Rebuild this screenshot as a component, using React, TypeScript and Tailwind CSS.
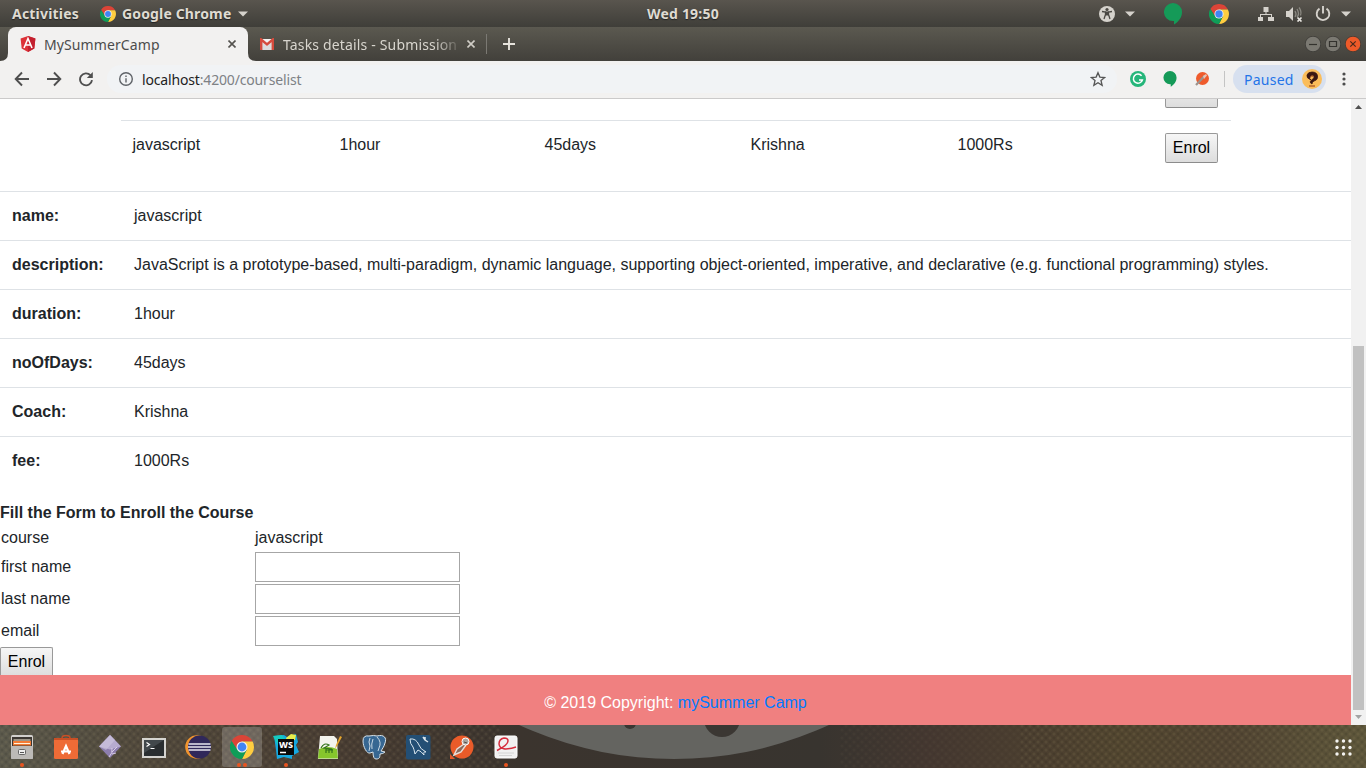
import React from "react";

const ChromeLogo = ({ size, className = "" }: { size: number; className?: string }) => (
  <svg width={size} height={size} viewBox="0 0 48 48" className={`shrink-0 ${className}`}>
    <path d="M24 13h20.2l.6-1A24 24 0 0 0 3.2 12L14.5 29.5z" fill="#db4437" />
    <path d="M24 13h21.3A24 24 0 0 1 24 48l9.5-18.5z" fill="#ffcd40" />
    <path d="M14.5 29.5 3.2 12A24 24 0 0 0 24 48l9.5-18.5z" fill="#0f9d58" />
    <circle cx="24" cy="24" r="11" fill="#f1f1f1" />
    <circle cx="24" cy="24" r="8.8" fill="#4285f4" />
  </svg>
);

const Caret = ({ className = "" }: { className?: string }) => (
  <svg width="10" height="6" viewBox="0 0 10 6" className={`shrink-0 ${className}`}>
    <path d="M0 .5h10L5 5.500z" fill="#d5d2cc" />
  </svg>
);

const Hangouts = ({ w, h, className = "" }: { w: number; h: number; className?: string }) => (
  <svg width={w} height={h} viewBox="0 0 18 22" className={`shrink-0 ${className}`}>
    <path d="M9 0a9 9 0 0 1 9 9.200c0 5.300-3.500 9.500-8 12.300v-3.400H9A9 9 0 0 1 9 0z" fill="#159a58" />
  </svg>
);

const TopBar = () => (
  <header className="flex h-[27px] shrink-0 items-center bg-linear-to-b from-[#59554e] to-[#3f3e39] text-[14px] font-bold text-[#dfdbd2] [text-shadow:0_1px_1px_#222]">
    <span className="ml-3 w-[88px] tracking-[0.2px]">Activities</span>
    <ChromeLogo size={16} />
    <span className="ml-[6px] w-[116px] whitespace-nowrap tracking-[0.15px]">Google Chrome</span>
    <Caret />
    <span className="ml-[399px] w-[452px] whitespace-nowrap tracking-[0.2px]">Wed 19:50</span>
    <svg width="16" height="16" viewBox="0 0 16 16" className="shrink-0">
      <circle cx="8" cy="8" r="8" fill="#d5d2cc" />
      <circle cx="8" cy="3.500" r="1.600" fill="#4a4843" />
      <path d="M3 5.500 6.500 6v2.500L5 13M13 5.500 9.500 6v2.500L11 13" fill="none" stroke="#4a4843" strokeWidth="1.300" />
      <path d="M6 5.500h4v4H6z" fill="#4a4843" />
    </svg>
    <Caret className="ml-[10px]" />
    <Hangouts w={18} h={22} className="ml-[29px]" />
    <ChromeLogo size={20} className="ml-[27px]" />
    <svg width="16" height="16" viewBox="0 0 16 16" className="ml-[29px] shrink-0" fill="#d5d2cc">
      <path d="M5.500 1h5v5h-5zM0 11h5v4H0zM10 11h6v4h-6zM7.500 6h1v2.500h-1zM2 8h12v1H2zM2 8h1v3H2zM13 8h1v3h-1z" />
    </svg>
    <svg width="18" height="16" viewBox="0 0 18 16" className="ml-[12px] shrink-0" fill="none">
      <path d="M0 5h3l4-4v14l-4-4H0z" fill="#d5d2cc" />
      <path d="M9 5q2 3 0 6M11 3q3 5 0 8M13 1.500q3 4 1.500 8" stroke="#8b8982" strokeWidth="1.300" />
      <path d="m11.500 11.500 4 4m0-4-4 4" stroke="#e8e6e1" strokeWidth="1.700" />
    </svg>
    <svg width="16" height="16" viewBox="0 0 16 16" className="ml-[11px] shrink-0" fill="none" stroke="#d5d2cc" strokeWidth="1.900">
      <path d="M4.500 2.600a6.300 6.300 0 1 0 7 0M8 0v7.500" />
    </svg>
    <Caret className="ml-[10px]" />
  </header>
);

const CloseX = ({ color, className = "" }: { color: string; className?: string }) => (
  <svg width="8" height="8" viewBox="0 0 8 8" className={`shrink-0 ${className}`}>
    <path d="m.5.5 7 7m0-7-7 7" stroke={color} strokeWidth="1.600" />
  </svg>
);

const TabStrip = () => (
  <div className="flex h-[34px] shrink-0 items-center bg-linear-to-b from-[#5b5950] to-[#42403b] text-[14px]">
    <svg width="8" height="34" viewBox="0 0 8 34" className="shrink-0">
      <path d="M8 26v8H0q8 0 8-8z" fill="#f2f1f0" />
    </svg>
    <div className="flex h-[34px] w-[240px] shrink-0 items-center rounded-t-[8px] bg-[#f2f1f0] text-[#4c4c4c]">
      <svg width="16" height="16" viewBox="0 0 16 16" className="ml-3 shrink-0">
        <path d="m8 0 7.400 2.600-1.100 9.800L8 16l-6.300-3.600L.6 2.600z" fill="#dd3137" />
        <path d="m8 0 7.400 2.600-1.100 9.800L8 16z" fill="#c3202f" />
        <path d="M4 12 8 2.500 12 12M5.800 9h4.400" stroke="#fff" strokeWidth="1.600" fill="none" />
      </svg>
      <span className="ml-2 w-[184px] whitespace-nowrap tracking-[0.1px]">MySummerCamp</span>
      <CloseX color="#55534f" />
    </div>
    <svg width="8" height="34" viewBox="0 0 8 34" className="shrink-0">
      <path d="M0 26v8h8q-8 0-8-8z" fill="#f2f1f0" />
    </svg>
    <svg width="14" height="12" viewBox="0 0 14 12" className="ml-1 shrink-0">
      <path d="M0 1h14v11H0z" fill="#f3f3f3" />
      <path d="M2 12V4l5 4 5-4v8" fill="#dcdcdc" />
      <path d="M1.200 12V1.500L7 6.500l5.800-5V12" fill="none" stroke="#d54b3d" strokeWidth="2.400" />
    </svg>
    <span className="ml-[9px] w-[176px] overflow-hidden whitespace-nowrap tracking-[0.16px] text-[#d8d5ce] [mask-image:linear-gradient(to_right,#000_86%,transparent_102%)]">
      Tasks details - Submission
    </span>
    <CloseX color="#d0cdc6" className="ml-[8px]" />
    <div className="ml-[11px] h-5 w-px bg-[#7b7973]" />
    <svg width="12" height="12" viewBox="0 0 12 12" className="ml-4 shrink-0">
      <path d="M6 0v12M0 6h12" stroke="#e6e3dc" strokeWidth="1.900" />
    </svg>
    <div className="ml-auto mr-[5px] flex gap-[4px]">
      <svg width="16" height="16" viewBox="0 0 16 16">
        <circle cx="8" cy="8" r="7.800" fill="#7b7972" stroke="#3a3935" strokeWidth=".8" />
        <path d="M4 8.500h8" stroke="#33322e" strokeWidth="1.200" />
      </svg>
      <svg width="16" height="16" viewBox="0 0 16 16">
        <circle cx="8" cy="8" r="7.800" fill="#7b7972" stroke="#3a3935" strokeWidth=".8" />
        <path d="M4.500 5.500h7v5h-7z" fill="none" stroke="#33322e" strokeWidth="1.200" />
      </svg>
      <svg width="16" height="16" viewBox="0 0 16 16">
        <circle cx="8" cy="8" r="7.800" fill="#ee5a29" stroke="#3a3935" strokeWidth=".8" />
        <path d="m5.300 5.300 5.400 5.400m0-5.400-5.400 5.400" stroke="#4a2a1c" strokeWidth="1.200" />
      </svg>
    </div>
  </div>
);

const Toolbar = () => (
  <div className="flex h-[38px] shrink-0 items-center border-b border-[#cbcaca] bg-[#f2f1f0] pb-px text-[14px]">
    <svg width="80" height="16" viewBox="0 0 80 16" className="ml-[14px] shrink-0" fill="none" stroke="#4f4f4f" strokeWidth="1.900">
      <path d="M15 8H2M8 1.500 1.700 8 8 14.500M33 8h13M40 1.500 46.300 8 40 14.500M76.400 4.200A6 6 0 1 0 78 9.200" />
      <path d="M78.800 1v6h-6z" fill="#4f4f4f" stroke="none" />
    </svg>
    <div className="ml-[13px] flex h-[28px] w-[1010px] shrink-0 items-center rounded-full bg-[#f1f3f5]">
      <svg width="14" height="14" viewBox="0 0 14 14" className="ml-[12px] shrink-0" fill="none" stroke="#5f6368" strokeWidth="1.400">
        <circle cx="7" cy="7" r="6.300" />
        <path d="M7 6.200v4.300M7 3.500v1.500" />
      </svg>
      <span className="ml-[9px] whitespace-nowrap tracking-[-0.16px] text-[#7d8185]">
        <span className="text-[#222]">localhost</span>:4200/courselist
      </span>
      <svg width="16" height="16" viewBox="0 0 24 24" className="ml-auto mr-[11px] shrink-0" fill="none" stroke="#555" strokeWidth="2">
        <path d="m12 2.500 2.800 6.600 7.200.6-5.500 4.700 1.700 7L12 17.600 5.800 21.400l1.700-7L2 9.700l7.200-.6z" />
      </svg>
    </div>
    <svg width="16" height="16" viewBox="0 0 16 16" className="ml-[13px] shrink-0">
      <circle cx="8" cy="8" r="8" fill="#25b67a" />
      <path d="M11.600 4.800A4.600 4.600 0 1 0 12.400 9H9" fill="none" stroke="#fff" strokeWidth="1.500" />
    </svg>
    <Hangouts w={14} h={16} className="ml-[17px]" />
    <svg width="16" height="16" viewBox="0 0 16 16" className="ml-[17px] shrink-0">
      <circle cx="8.500" cy="7.500" r="6.500" fill="#ef5b2c" />
      <path d="M2 14 11 4.500" stroke="#9c938e" strokeWidth="2.200" />
      <path d="m9 5 3-2 1 1.500L10 8z" fill="#e8c3b4" />
    </svg>
    <div className="ml-[14px] h-4 w-px bg-[#c4c4c4]" />
    <div className="ml-2 flex h-7 w-[93px] shrink-0 items-center rounded-full bg-[#d7e0ef] text-[#2374e8]">
      <span className="ml-[11px] w-[58px] tracking-[0.25px]">Paused</span>
      <svg width="20" height="20" viewBox="0 0 20 20" className="shrink-0">
        <circle cx="10" cy="10" r="10" fill="#fbbd5b" />
        <path d="M9 11Q4 9 5 6t5-3q5 0 5.500 4T12 12q-2 1-2 3-4-2 1-5 2-2 0-3T8 8t1 3z" fill="#3b1712" stroke="#3b1712" strokeWidth=".8" />
        <path d="M8 8.500q2-3 4-1" stroke="#c36a2d" fill="none" />
        <path d="M7 17h6" stroke="#b5642c" strokeWidth="1.500" />
      </svg>
    </div>
    <svg width="4" height="14" viewBox="0 0 4 14" className="ml-[16px] shrink-0" fill="#4c4c4c">
      <circle cx="2" cy="2" r="1.600" />
      <circle cx="2" cy="7" r="1.600" />
      <circle cx="2" cy="12" r="1.600" />
    </svg>
  </div>
);

const EnrolButton = ({ label = "Enrol" }: { label?: string }) => (
  <button className="block h-[30px] w-[53px] shrink-0 rounded-[2px] border border-[#999] border-b-[#8c8c8c] bg-linear-to-b from-[#f6f6f6] to-[#dddddd] text-center text-[16px] leading-[26px] text-black">
    {label}
  </button>
);

const details: [string, string][] = [
  ["name:", "javascript"],
  ["description:", "JavaScript is a prototype-based, multi-paradigm, dynamic language, supporting object-oriented, imperative, and declarative (e.g. functional programming) styles."],
  ["duration:", "1hour"],
  ["noOfDays:", "45days"],
  ["Coach:", "Krishna"],
  ["fee:", "1000Rs"],
];

const Page = () => (
  <main className="flex h-[626px] w-[1351px] shrink-0 flex-col overflow-hidden bg-white text-[16px] leading-[24px] text-[#212529] [font-family:'Liberation_Sans',Arial,sans-serif]">
    <div className="ml-[121px] flex h-[21px] w-[1110px] shrink-0 items-end overflow-hidden pb-3 pl-[1044px]">
      <EnrolButton label="" />
    </div>
    <div className="ml-[121px] grid h-[55px] w-[1110px] shrink-0 grid-cols-[207px_205px_206px_207px_207px_78px] border-t border-[#dee2e6] pt-3 [&>span]:pl-[11.500px]">
      <span>javascript</span>
      <span>1hour</span>
      <span>45days</span>
      <span>Krishna</span>
      <span>1000Rs</span>
      <div className="pl-3"><EnrolButton /></div>
    </div>
    <div className="mt-4 shrink-0">
      {details.map(([label, value]) => (
        <div key={label} className="flex h-[49px] border-t border-[#dee2e6] pt-3">
          <b className="w-[134px] shrink-0 pl-3">{label}</b>
          <span className="whitespace-nowrap">{value}</span>
        </div>
      ))}
    </div>
    <b className="mt-4 shrink-0">Fill the Form to Enroll the Course</b>
    <div className="flex h-[26px] shrink-0 px-px pt-px">
      <span className="w-[254px]">course</span>
      <span>javascript</span>
    </div>
    {["first name", "last name", "email"].map((label) => (
      <label key={label} className="flex h-8 shrink-0 items-center px-px">
        <span className="w-[254px]">{label}</span>
        <input className="h-[30px] w-[205px] border border-[#a6a6a6] bg-white" />
      </label>
    ))}
    <div className="h-7 shrink-0 overflow-hidden"><EnrolButton /></div>
    <footer className="h-[50px] shrink-0 bg-[#f08080] pt-4 text-center text-white">
      © 2019 Copyright: <a className="text-[#007bff]">mySummer Camp</a>
    </footer>
  </main>
);

const Scrollbar = () => (
  <div className="flex w-[15px] flex-col items-center bg-[#f1f1f1]">
    <svg width="15" height="15" viewBox="0 0 15 15"><path d="M4 10h7L7.500 6z" fill="#505050" /></svg>
    <div className="mt-[232px] h-[364px] w-[11px] bg-[#c1c1c1]" />
    <svg width="15" height="15" viewBox="0 0 15 15"><path d="M4 5h7L7.500 9z" fill="#a3a3a3" /></svg>
  </div>
);

const dockIcons: { dots: number; art: React.ReactNode }[] = [
  {
    dots: 1,
    art: (
      <>
        <rect x="1" y="0" width="22" height="24" rx="1.500" fill="#d2d0cd" />
        <path d="M2 2h20v9H2z" fill="#3d3833" />
        <path d="M3 6h18v4.500H3z" fill="#f37b35" />
        <path d="M3.500 5h17M4 8.500h16" stroke="#fff3dd" strokeWidth="1" />
        <path d="M1 11h22v11.500a1.500 1.500 0 0 1-1.500 1.500h-19A1.500 1.500 0 0 1 1 22.500z" fill="#bcbab7" />
        <rect x="8.500" y="14.500" width="7" height="5" rx="1" fill="#eee" stroke="#666" />
        <path d="M10 17.500h4" stroke="#555" />
      </>
    ),
  },
  {
    dots: 0,
    art: (
      <>
        <path d="M8 5V3Q8 .5 12 .5T16 3v2" fill="none" stroke="#c94f25" strokeWidth="1.500" />
        <path d="M0 3h24v19.500a1.500 1.500 0 0 1-1.500 1.500h-21A1.500 1.500 0 0 1 0 22.500z" fill="#ee6b36" />
        <path d="M0 3h24v2H0z" fill="#c94f25" />
        <path d="m8.500 19 3.500-8 3.500 8M7 16.500h10" stroke="#fff" strokeWidth="2.200" fill="none" />
      </>
    ),
  },
  {
    dots: 0,
    art: (
      <>
        <path d="m12 0 11 11.500L12 23 1 11.500z" fill="#8d7eae" />
        <path d="m12 0 11 11.500-11 3L1 11.500z" fill="#b7abd0" />
        <path d="m12 0 5 5-9 10-7-3.500z" fill="#cfc6df" opacity=".6" />
        <path d="M11 22q4-4 3-9m0 4 5-5m-5 7 4-1" fill="none" stroke="#d8cce8" />
      </>
    ),
  },
  {
    dots: 0,
    art: (
      <>
        <path d="M1 4h22v18H1z" fill="#2a2e30" stroke="#d5d4d0" strokeWidth="2" />
        <path d="M2 5h20L2 18z" fill="#535a5d" opacity=".6" />
        <path d="m4.500 7.500 3 2-3 2M8.500 13.500h4" fill="none" stroke="#fff" strokeWidth="1.200" />
      </>
    ),
  },
  {
    dots: 0,
    art: (
      <>
        <circle cx="11" cy="12" r="11.800" fill="#f2942d" />
        <circle cx="13.500" cy="12" r="11.500" fill="#30285a" />
        <path d="M2.500 9h22M2 12h23M2.500 15h22" stroke="#e6e5f0" strokeWidth="1.500" />
      </>
    ),
  },
  { dots: 2, art: null },
  {
    dots: 1,
    art: (
      <>
        <path d="m0 1 10-1 3 2 9-3 2 8-2 3 3 7-7 4 0 3-8-2-7 2-1-9z" fill="#16a8e0" />
        <path d="m12 3 5-4 5 1-1 5-8 1z" fill="#e9ed4c" />
        <path d="m-1 1 9-1 4 5-8 6z" fill="#16c9c0" />
        <path d="M4 4h16v16H4z" fill="#090909" />
        <path d="M6 17.500h6" stroke="#fff" strokeWidth="1.500" />
        <text x="5" y="13" fontSize="9.500" fontWeight="800" fill="#fff" textLength="14" lengthAdjust="spacingAndGlyphs">WS</text>
      </>
    ),
  },
  {
    dots: 0,
    art: (
      <>
        <path d="M2 1h14l3 3 1 20H0z" fill="#f3f3ed" />
        <path d="M1 14q9-4 18 0l1 9.500H0z" fill="#86c62c" />
        <path d="M3 13q3-6 8-3l-5 3 8 1M8 15h7M8 14v4m3-4v4m3-4v4" fill="none" stroke="#33731b" strokeWidth="1.200" />
        <path d="m17 14 1-4 4-9 2 1-5 9z" fill="#e6a62d" />
      </>
    ),
  },
  {
    dots: 0,
    art: (
      <>
        <path d="M7 1q5-1 8 0c7-2 10 2 8 7-1 4-3 6-4 8l4 1q-2 2-5 2c0 4-1 5-4 5q-3 0-3-7l-3 1C5 19 1 12 1 6q0-6 6-5z" fill="#376792" stroke="#d9e4ec" />
        <path d="M8 3q-2 4 0 8l-1 5M15 2q5 5 2 11m-6-9q-2 5-1 10m6 2 1-3" fill="none" stroke="#d9e4ec" strokeWidth=".9" />
      </>
    ),
  },
  {
    dots: 0,
    art: (
      <>
        <rect x="0" y="0" width="24.500" height="24.500" rx="2" fill="#234f75" />
        <path d="M4 4q6-1 9 6 1 4 7 7-3-1-2 3-3-4-6-5l-3 4q-1-5-2-7-3-3-3-8z" fill="none" stroke="#dae7ef" />
        <path d="m17 2 2 3 3 2m-3-2V2" stroke="#dbe5eb" strokeWidth="1.500" fill="none" />
      </>
    ),
  },
  {
    dots: 0,
    art: (
      <>
        <path d="M0 24v-5l5 5z" fill="#e65626" />
        <circle cx="12" cy="12" r="11.500" fill="#ea5b29" />
        <path d="M14 9 7 14l-3 6 7-3 5-7" fill="#8b6a5c" stroke="#e8ded8" strokeWidth="1.400" />
        <circle cx="15.500" cy="6.500" r="3.500" fill="#a9a5a0" stroke="#fff" />
        <path d="m14 7 3 1" stroke="#544e4a" />
      </>
    ),
  },
  {
    dots: 1,
    art: (
      <>
        <rect x="1" y="1" width="22" height="22" rx="2" fill="#f1f1f1" stroke="#fff" />
        <path d="M3 15.500Q14 10 14 6q0-3-4-3-5 1-5 6 1 8 17 3" fill="none" stroke="#d52d3d" strokeWidth="1.500" />
        <path d="M4 18h16M5 20.500h13" stroke="#d4d4d4" />
      </>
    ),
  },
];

const Dock = () => (
  <footer className="relative flex h-[43px] shrink-0 items-start overflow-hidden bg-[linear-gradient(90deg,#5b594c_0%,#51493c_10%,#483c32_25%,#3b342e_38%,#38342f_60%,#443730_68%,#51452f_82%,#514432_90%,#5d563a_100%)]">
    <svg width="1366" height="43" viewBox="0 725 1366 43" className="absolute inset-0">
      <defs>
        <pattern id="weave" width="8" height="8" patternUnits="userSpaceOnUse">
          <circle cx="2" cy="2" r="1.500" fill="#b5a575" opacity=".1" />
          <circle cx="6" cy="6" r="1.500" fill="#b5a575" opacity=".1" />
          <circle cx="6" cy="2" r="1.500" fill="#1c1510" opacity=".12" />
          <circle cx="2" cy="6" r="1.500" fill="#1c1510" opacity=".12" />
        </pattern>
      </defs>
      <rect y="725" width="500" height="43" fill="url(#weave)" />
      <rect x="1020" y="725" width="346" height="43" fill="url(#weave)" />
      <rect x="840" y="725" width="180" height="43" fill="url(#weave)" opacity=".4" />
      <circle cx="674" cy="389" r="370" fill="#646460" />
      <circle cx="630" cy="723" r="6" fill="#3b3733" />
      <circle cx="722" cy="719" r="18" fill="#3b3733" />
    </svg>
    {dockIcons.map((icon, i) => (
      <div key={i} className="relative flex h-[43px] w-11 shrink-0 justify-center pt-[2px]">
        <div className={`flex h-10 w-10 flex-col items-center ${i === 5 ? "rounded-[3px] bg-white/20" : ""}`}>
          {i === 5 ? (
            <ChromeLogo size={24} className="mt-[8px]" />
          ) : (
            <svg width="24" height="24" viewBox="0 0 24 24" className="mt-[8px] shrink-0 overflow-visible">{icon.art}</svg>
          )}
          <div className="mt-[4px] flex gap-[2px]">
            {Array.from({ length: icon.dots }, (_, d) => (
              <i key={d} className="h-[4px] w-[4px] rounded-full bg-[#e95420]" />
            ))}
          </div>
        </div>
      </div>
    ))}
    <svg width="17" height="17" viewBox="0 0 17 17" className="relative ml-auto mr-[14px] mt-[14px] shrink-0" fill="#f4f3f0">
      {[2, 8.5, 15].map((y) => [2, 8.5, 15].map((x) => <circle key={`${x}-${y}`} cx={x} cy={y} r="1.700" />))}
    </svg>
  </footer>
);

export default function App() {
  return (
    <div className="flex h-[768px] w-[1366px] flex-col overflow-hidden bg-white [font-family:'Noto_Sans',sans-serif]">
      <TopBar />
      <TabStrip />
      <Toolbar />
      <div className="flex h-[626px] shrink-0">
        <Page />
        <Scrollbar />
      </div>
      <Dock />
    </div>
  );
}
